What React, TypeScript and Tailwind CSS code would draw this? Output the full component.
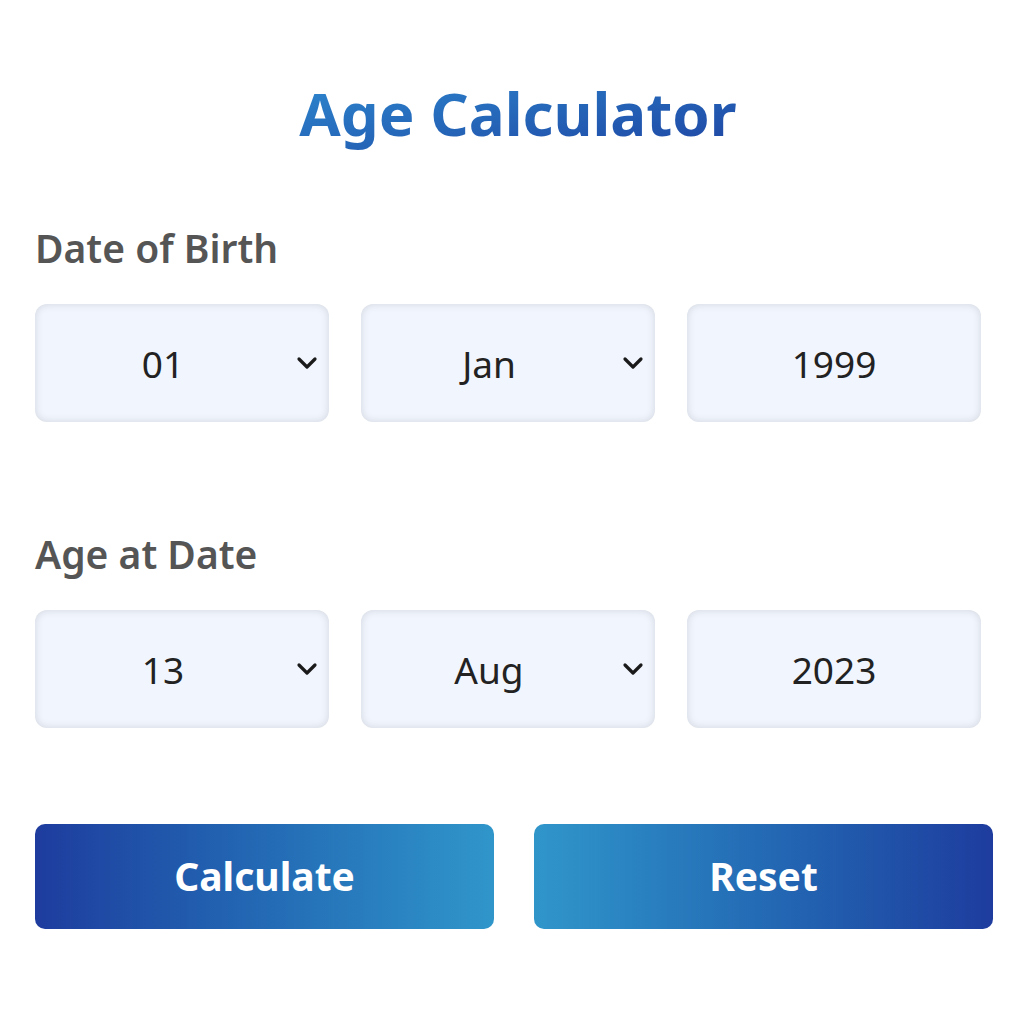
import React from "react";

const font = { fontFamily: '"Noto Sans", "Open Sans", sans-serif' };

function Chevron() {
  return (
    <svg width="22" height="14" viewBox="0 0 22 14" className="absolute right-[11px] top-1/2 -translate-y-1/2">
      <path d="M3 3 L11 11 L19 3" fill="none" stroke="#1a1a1a" strokeWidth="3.2" strokeLinecap="round" strokeLinejoin="round" />
    </svg>
  );
}

function Field({ value, select }: { value: string; select?: boolean }) {
  return (
    <div className="relative h-[118px] rounded-[12px] bg-[#f1f5fd] shadow-[inset_0_0_9px_rgba(0,0,0,0.13)] flex items-center justify-center">
      <span className={"text-[37px] text-[#222] leading-none " + (select ? "pr-[38px]" : "")}>{value}</span>
      {select && <Chevron />}
    </div>
  );
}

export default function App() {
  return (
    <div className="w-[1024px] h-[1024px] bg-white px-[35px] pt-[83px]" style={font}>
      <h1 className="text-center text-[60px] font-bold leading-none pl-[12px]">
        <span className="bg-gradient-to-br from-[#2f8ad0] to-[#1f43a2] bg-clip-text text-transparent">Age Calculator</span>
      </h1>
      <div className="mt-[85px] text-[39px] font-semibold text-[#555] leading-none">Date of Birth</div>
      <div className="mt-[37px] w-[946px] grid grid-cols-3 gap-[32px]">
        <Field value="01" select />
        <Field value="Jan" select />
        <Field value="1999" />
      </div>
      <div className="mt-[112px] text-[39px] font-semibold text-[#555] leading-none">Age at Date</div>
      <div className="mt-[37px] w-[946px] grid grid-cols-3 gap-[32px]">
        <Field value="13" select />
        <Field value="Aug" select />
        <Field value="2023" />
      </div>
      <div className="mt-[96px] w-[958px] grid grid-cols-2 gap-[40px]">
        <button className="h-[105px] rounded-[10px] bg-gradient-to-r from-[#1e3c9e] to-[#3096ca] text-white text-[39px] font-bold">
          Calculate
        </button>
        <button className="h-[105px] rounded-[10px] bg-gradient-to-r from-[#3096ca] to-[#1e3c9e] text-white text-[39px] font-bold">
          Reset
        </button>
      </div>
    </div>
  );
}
